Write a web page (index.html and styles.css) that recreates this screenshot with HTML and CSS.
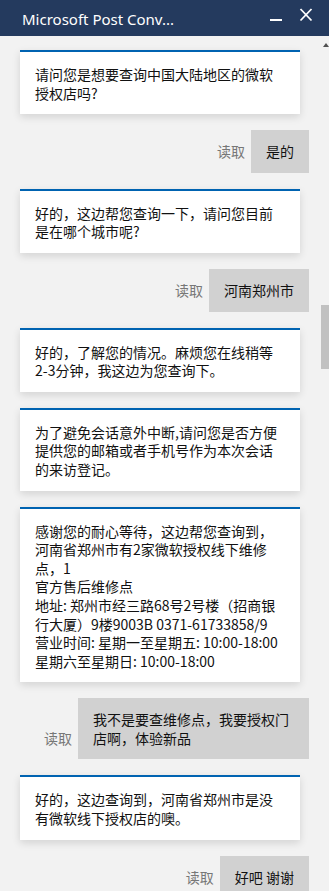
FILE: index.html
```html
<!DOCTYPE html>
<html lang="zh-CN">
<head>
<meta charset="utf-8">
<title>Microsoft Post Conversation</title>
<link rel="stylesheet" href="styles.css">
</head>
<body>
<div class="window">
  <header class="titlebar">
    <span class="title">Microsoft Post Conv...</span>
    <div class="controls">
      <svg class="ctl" width="14" height="36" viewBox="0 0 14 36" aria-label="最小化"><line x1="1" y1="20" x2="13" y2="20" stroke="#fff" stroke-width="2"/></svg>
      <svg class="ctl" width="14" height="36" viewBox="0 0 14 36" aria-label="关闭"><line x1="1.5" y1="9" x2="12.5" y2="20.5" stroke="#fff" stroke-width="1.8"/><line x1="12.5" y1="9" x2="1.5" y2="20.5" stroke="#fff" stroke-width="1.8"/></svg>
    </div>
  </header>
  <main class="chat">
    <div class="msg bot"><p>请问您是想要查询中国大陆地区的微软<br>授权店吗?</p></div>
    <div class="msg user"><span class="read">读取</span><p>是的</p></div>
    <div class="msg bot"><p>好的，这边帮您查询一下，请问您目前<br>是在哪个城市呢?</p></div>
    <div class="msg user"><span class="read">读取</span><p>河南郑州市</p></div>
    <div class="msg bot"><p>好的，了解您的情况。麻烦您在线稍等<br>2-3分钟，我这边为您查询下。</p></div>
    <div class="msg bot"><p>为了避免会话意外中断,请问您是否方便<br>提供您的邮箱或者手机号作为本次会话<br>的来访登记。</p></div>
    <div class="msg bot"><p>感谢您的耐心等待，这边帮您查询到，<br>河南省郑州市有2家微软授权线下维修<br>点，1<br>官方售后维修点<br>地址: 郑州市经三路68号2号楼（招商银<br>行大厦）9楼9003B 0371-61733858/9<br>营业时间: 星期一至星期五: 10:00-18:00<br>星期六至星期日: 10:00-18:00</p></div>
    <div class="msg user"><span class="read">读取</span><p class="wrap">我不是要查维修点，我要授权门<br>店啊，体验新品</p></div>
    <div class="msg bot"><p>好的，这边查询到，河南省郑州市是没<br>有微软线下授权店的噢。</p></div>
    <div class="msg user"><span class="read">读取</span><p>好吧 谢谢</p></div>
  </main>
  <div class="scrollbar">
    <span class="arrow"></span>
    <span class="thumb"></span>
  </div>
</div>
</body>
</html>
```

FILE: styles.css
```css
html, body {
  margin: 0;
  padding: 0;
}
body {
  width: 329px;
  height: 891px;
  overflow: hidden;
  background: #f2f2f2;
  font-family: "Segoe UI", "Noto Sans", "Noto Sans CJK SC", sans-serif;
}
.window {
  position: relative;
  height: 891px;
  display: flex;
  flex-direction: column;
}
.titlebar {
  height: 36px;
  flex: none;
  background: #243a5e;
  display: flex;
  align-items: center;
  padding: 0 16px 0 22px;
}
.title {
  flex: 1;
  color: #fff;
  font-size: 15px;
  letter-spacing: 0;
  line-height: 36px;
  padding-top: 2px;
}
.controls {
  display: flex;
  gap: 16px;
  align-self: stretch;
}
.ctl {
  display: block;
}
.chat {
  display: flex;
  flex-direction: column;
  gap: 16px;
  padding: 14px 20px 0 20px;
  width: 289px;
  font-family: "Noto Sans CJK SC", "Noto Sans", sans-serif;
  font-size: 14px;
  line-height: 18.6px;
  color: #111;
}
.msg p {
  margin: 0;
  white-space: nowrap;
}
.bot {
  width: 280px;
  box-sizing: border-box;
  background: #fff;
  border-top: 2px solid #0063b1;
  padding: 13px 15px 12px 15px;
  box-shadow: 0 3px 8px rgba(0, 0, 0, 0.13);
}
.user {
  display: flex;
  justify-content: flex-end;
  align-items: flex-end;
  gap: 6px;
}
.user p {
  background: #d1d1d1;
  padding: 12px 15px;
  max-width: 201px;
}
.user p.wrap {
  width: 201px;
}
.read {
  color: #777;
  padding-bottom: 12px;
}
.scrollbar {
  position: absolute;
  top: 36px;
  right: 0;
  width: 8px;
  bottom: 0;
}
.arrow {
  position: absolute;
  top: 7px;
  right: 0;
  width: 0;
  height: 0;
  border-left: 3.5px solid transparent;
  border-right: 3.5px solid transparent;
  border-bottom: 4px solid #505050;
}
.thumb {
  position: absolute;
  top: 269px;
  left: 0;
  width: 8px;
  height: 64px;
  background: #c1c1c1;
}
```
